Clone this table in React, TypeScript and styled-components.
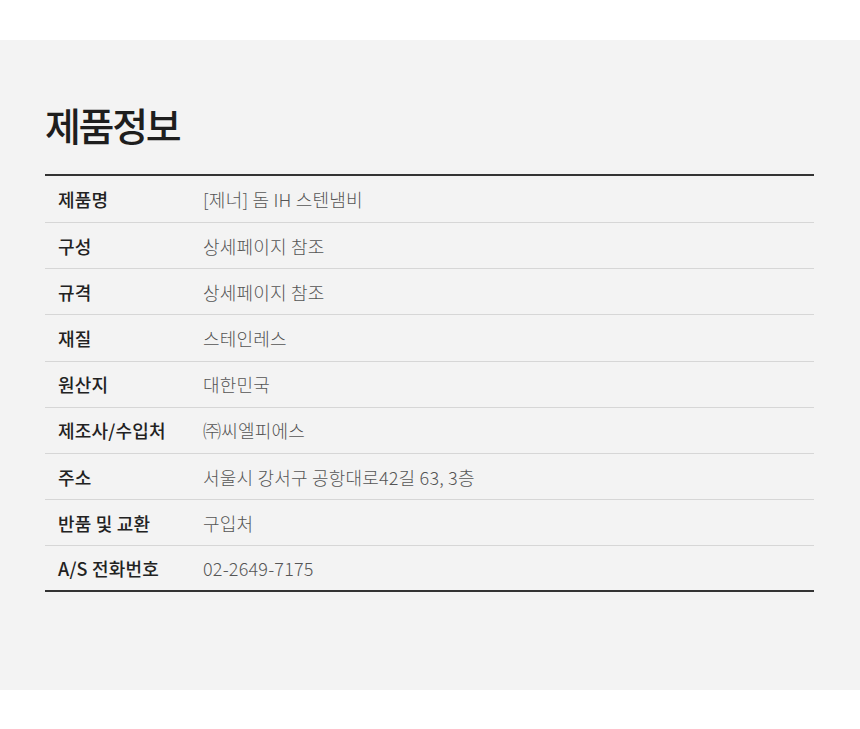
import React from "react";
import styled, { createGlobalStyle } from "styled-components";

const Global = createGlobalStyle`
  html, body { margin: 0; padding: 0; background: #ffffff; }
  body { font-family: "Noto Sans CJK KR", "Noto Sans", sans-serif; }
`;

const Section = styled.section`
  margin-top: 40px;
  height: 650px;
  box-sizing: border-box;
  background: #f3f3f3;
  padding: 54px 46px 0 45px;
`;

const Title = styled.h2`
  margin: 0 0 20px 0;
  font-size: 39px;
  font-weight: 500;
  letter-spacing: -2.3px;
  color: #1e1e1e;
  line-height: 60px;
`;

const Table = styled.div`
  border-top: 2px solid #333333;
  border-bottom: 2px solid #333333;
`;

const Row = styled.div`
  display: grid;
  grid-template-columns: 158px 1fr;
  align-items: center;
  height: 45.2px;
  border-bottom: 1px solid #d6d6d6;
  &:first-child { height: 46px; }
  &:last-child { border-bottom: none; height: 44px; }
`;

const Label = styled.div`
  padding-left: 13px;
  font-size: 18px;
  font-weight: 500;
  color: #222222;
  letter-spacing: 0.2px;
`;

const Value = styled.div`
  font-size: 18px;
  font-weight: 300;
  color: #555555;
  letter-spacing: 0.2px;
`;

const rows: [string, string][] = [
  ["제품명", "[제너] 돔 IH 스텐냄비"],
  ["구성", "상세페이지 참조"],
  ["규격", "상세페이지 참조"],
  ["재질", "스테인레스"],
  ["원산지", "대한민국"],
  ["제조사/수입처", "㈜씨엘피에스"],
  ["주소", "서울시 강서구 공항대로42길 63, 3층"],
  ["반품 및 교환", "구입처"],
  ["A/S 전화번호", "02-2649-7175"],
];

export default function App() {
  return (
    <>
      <Global />
      <Section>
        <Title>제품정보</Title>
        <Table>
          {rows.map(([k, v]) => (
            <Row key={k}>
              <Label>{k}</Label>
              <Value>{v}</Value>
            </Row>
          ))}
        </Table>
      </Section>
    </>
  );
}
